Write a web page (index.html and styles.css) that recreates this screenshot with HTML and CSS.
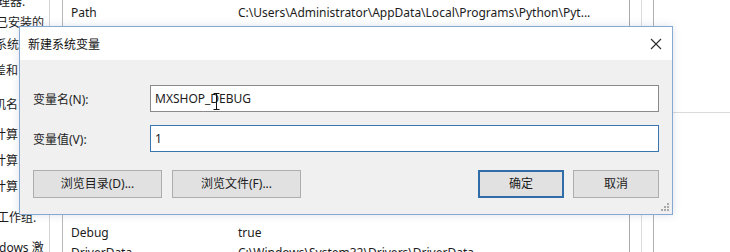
FILE: index.html
```html
<!DOCTYPE html>
<html lang="zh-CN">
<head>
<meta charset="utf-8">
<title>新建系统变量</title>
<link rel="stylesheet" href="styles.css">
</head>
<body>
<div class="screen">
  <aside class="side">
    <div class="side-line">设备管理器.</div>
    <div class="side-line">已安装的</div>
    <div class="side-line">系统保护</div>
    <div class="side-line">差和</div>
    <div class="side-line">机名</div>
    <div class="side-line">计算</div>
    <div class="side-line">计算</div>
    <div class="side-line">计算</div>
    <div class="side-line">工作组.</div>
    <div class="side-line">dows 激</div>
  </aside>
  <div class="gutter"></div>
  <section class="list">
    <div class="row"><span class="name">Path</span><span class="val">C:\Users\Administrator\AppData\Local\Programs\Python\Pyt...</span></div>
    <div class="row"><span class="name">TEMP</span><span class="val">C:\Users\Administrator\AppData\Local\Temp</span></div>
    <div class="row"><span class="name">TMP</span><span class="val">C:\Users\Administrator\AppData\Local\Temp</span></div>
    <div class="row"><span class="name"></span><span class="val"></span></div>
    <div class="row"><span class="name"></span><span class="val"></span></div>
    <div class="row"><span class="name"></span><span class="val"></span></div>
    <div class="row"><span class="name"></span><span class="val"></span></div>
    <div class="row"><span class="name"></span><span class="val"></span></div>
    <div class="row"><span class="name"></span><span class="val"></span></div>
    <div class="row"><span class="name"></span><span class="val"></span></div>
    <div class="row high"><span class="name">ComSpec</span><span class="val">C:\Windows\system32\cmd.exe</span></div>
    <div class="row"><span class="name">Debug</span><span class="val">true</span></div>
    <div class="row"><span class="name">DriverData</span><span class="val">C:\Windows\System32\Drivers\DriverData</span></div>
  </section>
  <div class="scroll"><div class="scroll-a"></div><div class="scroll-b"></div></div>
  <div class="rest"><div class="rest-top"></div></div>
</div>

<div class="dialog">
  <div class="titlebar">
    <span class="title">新建系统变量</span>
    <svg class="close" width="12" height="12" viewBox="0 0 12 12"><path d="M1 1 L11 11 M11 1 L1 11" stroke="#2b2b2b" stroke-width="1.1" fill="none"/></svg>
  </div>
  <div class="body">
    <div class="field">
      <label class="label">变量名(N):</label>
      <div class="input">MXSHOP_DEBUG
        <svg class="ibeam" width="7" height="17" viewBox="0 0 7 17"><path d="M0.5 0.5 H6.5 M3.5 0.5 V16.5 M0.5 16.5 H6.5" stroke="#111" stroke-width="1" fill="none"/></svg>
      </div>
    </div>
    <div class="field">
      <label class="label">变量值(V):</label>
      <div class="input focus">1</div>
    </div>
    <div class="buttons">
      <div class="btn wide">浏览目录(D)...</div>
      <div class="btn wide">浏览文件(F)...</div>
      <div class="spacer"></div>
      <div class="btn default">确定</div>
      <div class="btn">取消</div>
    </div>
    <svg class="grip" width="8" height="8" viewBox="0 0 8 8"><g fill="#a9a9a9"><rect x="6" y="0" width="2" height="2"/><rect x="3" y="3" width="2" height="2"/><rect x="6" y="3" width="2" height="2"/><rect x="0" y="6" width="2" height="2"/><rect x="3" y="6" width="2" height="2"/><rect x="6" y="6" width="2" height="2"/></g></svg>
  </div>
</div>
</body>
</html>
```
FILE: styles.css
```css
* { box-sizing: border-box; }

body {
  margin: 0;
  width: 730px;
  height: 252px;
  overflow: hidden;
  position: relative;
  background: #fff;
  font-family: "Noto Sans", "Noto Sans CJK SC", sans-serif;
  font-size: 12px;
  color: #1c1c1c;
}

.screen {
  display: flex;
  height: 252px;
}

/* left window fragment */
.side {
  width: 50px;
  border-right: 1px solid #d4d4d4;
  overflow: hidden;
  white-space: nowrap;
}
.side-line {
  height: 14px;
  line-height: 14px;
  margin-left: -5px;
}
.side-line:nth-child(1) { margin-top: -5px; margin-left: -38px; }
.side-line:nth-child(2) { margin-top: 7px; margin-left: -4px; }
.side-line:nth-child(3) { margin-top: 8px; margin-left: -5px; }
.side-line:nth-child(4) { margin-top: 12px; margin-left: -6px; }
.side-line:nth-child(5) { margin-top: 20px; margin-left: -6px; }
.side-line:nth-child(6) { margin-top: 16px; margin-left: -6px; }
.side-line:nth-child(7) { margin-top: 12px; margin-left: -6px; }
.side-line:nth-child(8) { margin-top: 12px; margin-left: -6px; }
.side-line:nth-child(9) { margin-top: 17px; margin-left: -3px; }
.side-line:nth-child(10) { margin-top: 16px; margin-left: -1px; }

.gutter {
  width: 13px;
  border-right: 1px solid #b8b8b8;
}

/* variables list */
.list {
  width: 567px;
  padding-top: 3px;
  border-right: 1px solid #a9a9a9;
  overflow: hidden;
}
.row {
  display: flex;
  height: 20px;
  line-height: 20px;
  padding-left: 8px;
  white-space: nowrap;
}
.row.high { line-height: 10px; }
.name { width: 167px; flex: none; }

.scroll { width: 24px; display: flex; }
.scroll-a { width: 12px; border-right: 1px solid #dcdcdc; }
.scroll-b { width: 12px; border-right: 1px solid #b0b0b0; }

.rest { flex: 1; }
.rest-top { height: 113px; border-bottom: 1px solid #dadada; }

/* dialog */
.dialog {
  position: absolute;
  left: 19px;
  top: 26px;
  width: 654px;
  height: 189px;
  border: 1px solid #86a9d2;
  background: #f0f0f0;
  box-shadow: 0 0 8px rgba(60, 90, 130, 0.18);
  display: flex;
  flex-direction: column;
}
.titlebar {
  height: 33px;
  flex: none;
  background: #fff;
  display: flex;
  align-items: center;
  justify-content: space-between;
  padding: 0 10px 0 8px;
}
.title { font-size: 12px; color: #111; }
.close { display: block; }

.body {
  flex: 1;
  position: relative;
  padding: 25px 13px 0 13px;
  display: flex;
  flex-direction: column;
  gap: 13px;
}
.field {
  display: flex;
  align-items: center;
}
.label {
  width: 117px;
  flex: none;
}
.input {
  flex: 1;
  height: 27px;
  line-height: 25px;
  padding-left: 4px;
  background: #fff;
  border: 1px solid #8a8a8a;
  position: relative;
}
.input.focus { border-color: #3a76ae; }
.ibeam {
  position: absolute;
  left: 62px;
  top: 7px;
}

.buttons {
  display: flex;
  gap: 10px;
  margin-top: 5px;
}
.btn {
  height: 28px;
  line-height: 26px;
  width: 86px;
  text-align: center;
  background: #e1e1e1;
  border: 1px solid #adadad;
}
.btn.wide { width: 129px; }
.btn.default { border: 2px solid #2f6ca8; line-height: 24px; margin-right: -1px; }
.spacer { flex: 1; }

.grip {
  position: absolute;
  right: 3px;
  bottom: 3px;
}
```
